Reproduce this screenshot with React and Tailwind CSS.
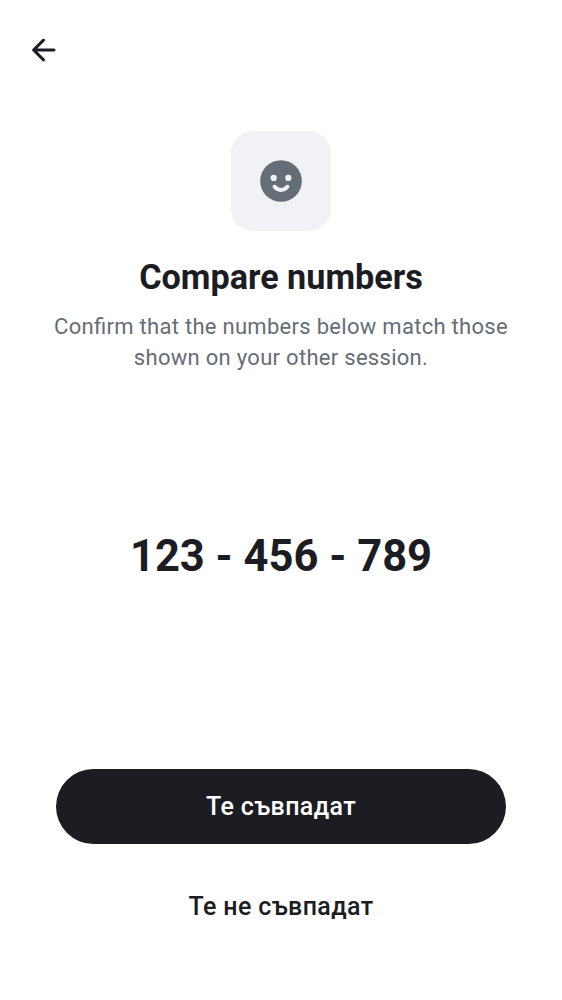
export default function App() {
  return (
    <main className="flex h-[1000px] w-[562px] flex-col bg-white font-['Roboto',sans-serif] text-[#1b1d22]">
      <header className="flex h-[100px] items-center pl-[25px]">
        <button aria-label="Back">
          <svg className="h-9 w-[37px]" viewBox="0 0 24 24" fill="currentColor">
            <path d="m7.825 13 4.9 4.9q.3.3.288.7t-.313.7q-.3.275-.7.288t-.7-.288l-6.6-6.6a.9.9 0 0 1-.213-.325A1.1 1.1 0 0 1 4.426 12q0-.2.062-.375a.9.9 0 0 1 .213-.325l6.6-6.6a.95.95 0 0 1 .687-.275q.412 0 .713.275.3.3.3.713t-.3.712L7.825 11H19q.425 0 .713.287.287.288.287.713t-.287.713A.97.97 0 0 1 19 13z" />
          </svg>
        </button>
      </header>
      <section className="flex flex-col items-center pt-[31px]">
        <div className="flex size-[100px] items-center justify-center rounded-[22px] bg-[#f0f2f5]">
          <svg className="size-[50px]" viewBox="0 0 24 24">
            <circle cx="12" cy="12" r="10" fill="#656d77" />
            <circle cx="8.5" cy="10.5" r="1.5" fill="#f0f2f5" />
            <circle cx="15.5" cy="10.5" r="1.5" fill="#f0f2f5" />
            <path d="M8.9 14.75C10.3 16.8 13.7 16.8 15.1 14.75" fill="none" stroke="#f0f2f5" strokeWidth="1.9" strokeLinecap="round" />
          </svg>
        </div>
        <h1 className="mt-[24px] h-[44px] text-[34.2px] leading-[44px] font-bold whitespace-nowrap">Compare numbers</h1>
        <p className="mt-[12px] text-center text-[22px] leading-[31px] tracking-[0.29px] whitespace-nowrap text-[#656d77] [font-feature-settings:'liga'_1]">
          Confirm that the numbers below match those<br />shown on your other session.
        </p>
      </section>
      <p className="mt-[159px] text-center text-[43.5px] leading-[50px] font-bold whitespace-nowrap">123 - 456 - 789</p>
      <footer className="mt-auto flex flex-col gap-[25px] px-[56px] pb-[56px]">
        <button className="h-[75px] rounded-full bg-[#1b1d22] text-[25px] font-medium tracking-[0.38px] text-white">Те съвпадат</button>
        <button className="h-[75px] rounded-full text-[25px] font-medium tracking-[0.38px]">Те не съвпадат</button>
      </footer>
    </main>
  );
}
